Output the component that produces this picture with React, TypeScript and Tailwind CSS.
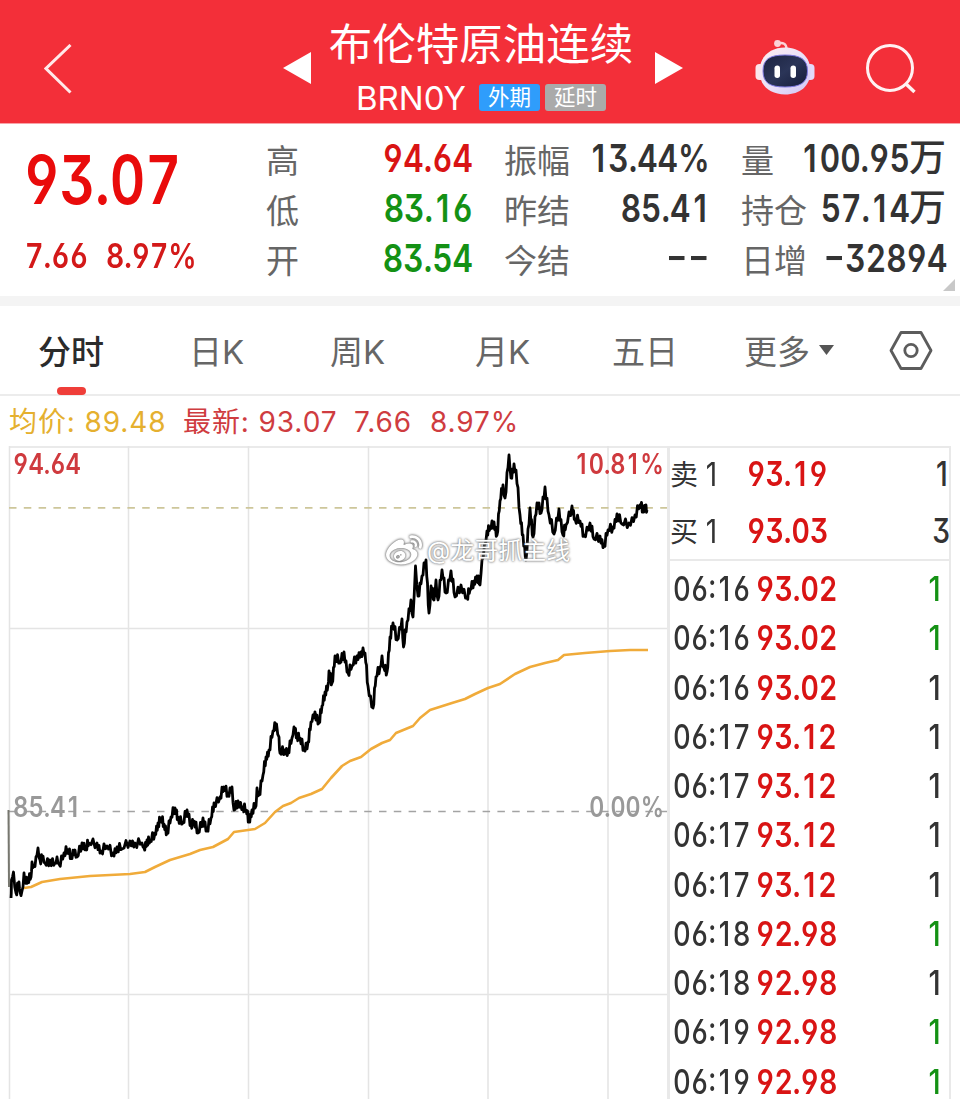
import React from "react";
import { FaWeibo } from "react-icons/fa";
import clsx from "clsx";

type Point = [number, number];

type Quote = {
  label: string;
  value: string;
  unit?: string;
  color: string;
};

type Trade = {
  time: string;
  price: string;
  volume: string;
  color: string;
};

const RED = "text-[#d91414]";
const GREEN = "text-[#149114]";
const DARK = "text-[#333333]";

const quotes: Quote[] = [
  { label: "高", value: "94.64", color: RED },
  { label: "振幅", value: "13.44%", color: DARK },
  { label: "量", value: "100.95", unit: "万", color: DARK },
  { label: "低", value: "83.16", color: GREEN },
  { label: "昨结", value: "85.41", color: DARK },
  { label: "持仓", value: "57.14", unit: "万", color: DARK },
  { label: "开", value: "83.54", color: GREEN },
  { label: "今结", value: "--", color: DARK },
  { label: "日增", value: "-32894", color: DARK },
];

const tabs = [
  { label: "分时", width: "w-[151px]" },
  { label: "日K", width: "w-[141px]" },
  { label: "周K", width: "w-[145px]" },
  { label: "月K", width: "w-[137px]" },
  { label: "五日", width: "w-[132px]" },
];

const orders = [
  { label: "卖", price: "93.19", volume: "1" },
  { label: "买", price: "93.03", volume: "3" },
];

const trades: Trade[] = [
  { time: "06:16", price: "93.02", volume: "1", color: GREEN },
  { time: "06:16", price: "93.02", volume: "1", color: GREEN },
  { time: "06:16", price: "93.02", volume: "1", color: DARK },
  { time: "06:17", price: "93.12", volume: "1", color: DARK },
  { time: "06:17", price: "93.12", volume: "1", color: DARK },
  { time: "06:17", price: "93.12", volume: "1", color: DARK },
  { time: "06:17", price: "93.12", volume: "1", color: DARK },
  { time: "06:18", price: "92.98", volume: "1", color: GREEN },
  { time: "06:18", price: "92.98", volume: "1", color: DARK },
  { time: "06:19", price: "92.98", volume: "1", color: GREEN },
  { time: "06:19", price: "92.98", volume: "1", color: GREEN },
];

const pricePoints: Point[] = [
  [11, 898], [11.5, 880], [13.5, 872], [16, 893], [19, 882], [20, 892], [22, 891],
  [24, 873], [25, 880], [28, 878], [31, 877], [32, 862], [34, 866], [36, 857],
  [38, 848], [40, 860], [43, 856], [45, 863], [50, 860], [55, 863], [57, 857],
  [59, 864], [64, 853], [68, 850], [71, 855], [75, 850], [77, 857], [82, 843],
  [86, 847], [89, 843], [97, 843], [101, 851], [107, 846], [113, 853], [117, 847],
  [122, 849], [130, 841], [135, 843], [142, 843], [144, 848], [147, 840], [150, 842],
  [155, 833], [158, 823], [161, 819], [164, 824], [167, 832], [171, 817], [175, 808],
  [178, 817], [183, 823], [187, 810], [191, 824], [194, 821], [198, 833], [203, 818],
  [207, 831], [211, 818], [214, 803], [220, 797], [224, 787], [228, 793], [232, 787],
  [234, 810], [238, 801], [243, 807], [246, 810], [249, 820], [252, 810], [256, 806],
  [257, 788], [259, 795], [263, 775], [266, 757], [269, 750], [273, 731], [276.5, 724],
  [279, 737], [280, 753], [285, 750], [288, 751], [292, 738], [294, 727], [297, 735],
  [300, 738], [304, 750], [308, 742], [311, 722], [313, 715], [317, 715], [319, 723],
  [322, 706], [325, 692], [328, 685], [329, 671], [332, 683], [335, 656], [340, 663],
  [344, 652], [348, 673], [352, 666], [357, 656], [361, 652], [365, 653], [368, 686],
  [373, 708], [376, 677], [380, 667], [382, 656], [384, 668], [387, 672], [390, 637],
  [393, 623], [397, 640], [402, 619], [403.5, 647], [407, 622], [411, 600], [413, 617],
  [415.5, 566], [418, 596], [422, 576], [426, 560], [429, 613], [431, 586], [434, 600],
  [436, 580], [438, 600], [442, 570], [446, 593], [451, 571], [455, 597], [461, 585],
  [467, 597], [470, 590], [474, 581], [477, 576], [480, 585], [482, 560], [487, 531],
  [490, 529], [494, 522], [497, 535], [500, 501], [503, 485], [505, 498], [509, 455],
  [511, 478], [514, 464], [516, 470], [520, 515], [523, 535], [526, 560], [530, 508],
  [533, 537], [537, 503], [541, 513], [545, 487], [549, 515], [554, 534], [559, 509],
  [563, 535], [566, 525], [572, 506], [575, 519], [580, 521], [584, 535], [590, 523],
  [594, 539], [600, 536], [604, 546], [608, 530], [613, 527], [617, 514], [622, 524],
  [629, 523], [635, 515], [640, 505], [643, 509], [646, 505], [647, 510],
];

const averagePoints: Point[] = [
  [24, 888], [31, 887], [42, 882], [60, 879], [90, 876], [130, 874], [145, 872],
  [155, 867], [170, 860], [190, 854], [200, 850], [213, 847], [228, 839], [234, 832],
  [255, 829], [265, 823], [275, 812], [283, 806], [291, 803], [299, 798], [311, 794],
  [322, 789], [331, 778], [342, 766], [350, 761], [361, 757], [371, 749], [382, 743],
  [390, 740], [396, 733], [413, 726], [420, 718], [430, 710], [452, 703], [465, 699],
  [475, 694], [488, 688], [500, 684], [515, 674], [530, 667], [545, 663], [558, 660],
  [564, 655], [585, 653], [610, 651], [630, 650], [648, 650],
];

const toPath = (points: Point[]) => points.map((p) => p.join(",")).join(" ");

// adds the minute-by-minute noise between two turning points
const withTicks = (points: Point[]) =>
  points.flatMap(([x, y], i): Point[] => {
    const next = points[i + 1];
    if (!next) return [[x, y]];
    const steps = next[0] - x > 2.5 ? 4 : 2;
    return Array.from({ length: steps }, (_, s): Point => {
      const t = s / steps;
      const noise = s === 0 ? 0 : (s % 2 ? 1 : -1) * (1 + 4 * Math.abs(Math.sin(i * 7.3 + s * 2.1)));
      return [x + (next[0] - x) * t, y + (next[1] - y) * t + noise];
    });
  });

// condensed tabular figures: open 6 / 9, flat-topped 3, a 1 without a foot and a long dash
const Num = ({ children, className }: { children: string; className?: string }) => (
  <span
    className={clsx(
      "inline-block whitespace-nowrap [font-feature-settings:'tnum','case','cv03','cv04','cv09']",
      className
    )}
  >
    {children.split(/(1|-+)/).map((part, i) => {
      if (part === "1")
        return (
          <span key={i} className="px-[0.1em] [font-feature-settings:normal]">
            1
          </span>
        );
      if (part.startsWith("-"))
        return (
          <span key={i} className="inline-block origin-right scale-x-[1.5] [font-feature-settings:'case']">
            {part}
          </span>
        );
      return part;
    })}
  </span>
);

const Robot = () => (
  <svg width="60" height="56" viewBox="0 0 60 56">
    <defs>
      <linearGradient id="shell" x1="0" y1="0" x2="1" y2="1">
        <stop offset="0" stopColor="#fdeef0" />
        <stop offset="0.55" stopColor="#e9e0f8" />
        <stop offset="1" stopColor="#cfc3f3" />
      </linearGradient>
      <linearGradient id="visor" x1="0" y1="0" x2="1" y2="1">
        <stop offset="0" stopColor="#1c2340" />
        <stop offset="0.5" stopColor="#2b3558" />
        <stop offset="1" stopColor="#161c3a" />
      </linearGradient>
    </defs>
    <path d="M23 3.500C28 2 31.500 4 31.500 9" fill="none" stroke="#fbd3d8" strokeWidth="2.400" />
    <circle cx="22.500" cy="3.500" r="3.400" fill="#fbd3d8" />
    <rect x="0.500" y="24" width="9" height="16" rx="4" fill="#fbe6ec" />
    <rect x="50.500" y="24" width="9" height="16" rx="4" fill="#e3dafa" />
    <path
      d="M30 7.500C45 7.500 55.500 17 55.500 31C55.500 46 45 54.500 30 54.500C15 54.500 4.500 46 4.500 31C4.500 17 15 7.500 30 7.500Z"
      fill="url(#shell)"
    />
    <path
      d="M30 15C45 15 52.500 19 52.500 31C52.500 43 45 47 30 47C15 47 8 43 8 31C8 19 15 15 30 15Z"
      fill="url(#visor)"
      stroke="#7d78e0"
      strokeWidth="1"
    />
    <rect x="19.500" y="25.500" width="5.500" height="12.500" rx="2.700" fill="#fff" />
    <rect x="35.500" y="25.500" width="5.500" height="12.500" rx="2.700" fill="#fff" />
  </svg>
);

const Header = () => (
  <header className="flex h-[124px] shrink-0 border-b border-[#f9a3a8] bg-[#f32f39] text-white">
    <div className="w-[283px] pt-[44px] pl-[44px]">
      <svg width="28" height="50" viewBox="0 0 28 50" fill="none" stroke="#ffe9ea" strokeWidth="3">
        <path d="M26.500 1L2 24.500L26.500 48.500" />
      </svg>
    </div>
    <svg className="mt-[52px] shrink-0" width="28" height="32" viewBox="0 0 28 32" fill="#fff">
      <path d="M0 16L28 0V32Z" />
    </svg>
    <div className="flex w-[344px] shrink-0 flex-col items-center">
      <h1 className="mt-[12px] -ml-[4px] h-[64px] text-[43.500px] leading-[64px] font-normal whitespace-nowrap">
        布伦特原油连续
      </h1>
      <div className="flex h-[43px] w-full items-center pl-[45px]">
        <span className="w-[123px] text-[33px] leading-[42px] font-normal">BRN0Y</span>
        <span className="flex h-[27px] w-[61px] items-center justify-center rounded-[3px] bg-[#2f9dfb] text-[21.500px] leading-none">
          外期
        </span>
        <span className="ml-[5px] flex h-[27px] w-[61px] items-center justify-center rounded-[3px] bg-[#aaaaaa] text-[21.500px] leading-none">
          延时
        </span>
      </div>
    </div>
    <svg className="mt-[52px] shrink-0" width="28" height="32" viewBox="0 0 28 32" fill="#fff">
      <path d="M28 16L0 0V32Z" />
    </svg>
    <div className="pt-[40px] pl-[72px]">
      <Robot />
    </div>
    <div className="pt-[43px] pl-[50px]">
      <svg width="52" height="52" viewBox="0 0 52 52" fill="none" stroke="#fff2f2" strokeWidth="3">
        <circle cx="25" cy="25" r="22.500" />
        <path d="M40.500 40.500L49.500 49" strokeWidth="3.500" />
      </svg>
    </div>
  </header>
);

const Summary = () => (
  <section className="relative flex h-[172px] shrink-0">
    <div className="w-[266px] pl-[24px] text-[#e90b0b]">
      <div className="h-[111px] pt-[15px]">
        <Num className="origin-left scale-x-[0.82] text-[67px] leading-[82px] font-semibold">93.07</Num>
      </div>
      <div className="flex pl-[1px] font-semibold text-[#d31919]">
        <div className="w-[81px]">
          <Num className="origin-left scale-x-[0.84] text-[34px] leading-[42px]">7.66</Num>
        </div>
        <Num className="origin-left scale-x-[0.83] text-[34px] leading-[42px]">8.97%</Num>
      </div>
    </div>
    <div className="grid h-[162px] grid-cols-[206px_237px_237px] grid-rows-3 pt-[12px]">
      {quotes.map((q, i) => (
        <div key={q.label} className={clsx("flex h-[50px] items-center", i % 3 !== 0 && "pl-[32px]")}>
          <span className="shrink-0 text-[33px] leading-[50px] text-[#666666]">{q.label}</span>
          <div className={clsx("-mt-[6px] flex min-w-0 flex-1 items-center justify-end", q.color)}>
            <Num className="origin-right translate-x-[1px] scale-x-[0.82] text-[38.500px] leading-[50px] font-semibold">
              {q.value}
            </Num>
            {q.unit && <span className="text-[37px] leading-[50px] font-medium">{q.unit}</span>}
          </div>
        </div>
      ))}
    </div>
    <svg className="absolute right-[5px] bottom-[5px]" width="12" height="12" viewBox="0 0 12 12">
      <path d="M12 0V12H0Z" fill="#c8c8c8" />
    </svg>
  </section>
);

const Tabs = () => (
  <nav className="flex h-[90px] shrink-0 border-b-2 border-[#ececec] pl-[38px] text-[33px] text-[#666666]">
    {tabs.map((tab, i) => (
      <div key={tab.label} className={clsx("shrink-0", tab.width)}>
        <div
          className={clsx(
            "w-fit pt-[22px] leading-[48px] whitespace-nowrap",
            i === 0 ? "font-medium text-[#2b2b2b]" : "font-normal"
          )}
        >
          {tab.label}
        </div>
        {i === 0 && <div className="mt-[11px] ml-[19px] h-[8px] w-[29px] rounded-full bg-[#ef3e39]" />}
      </div>
    ))}
    <div className="flex w-[145px] shrink-0 items-center pt-[4px]">
      <span className="leading-[48px]">更多</span>
      <svg className="mb-[4px] ml-[9px]" width="15" height="10" viewBox="0 0 15 10" fill="#555">
        <path d="M0 0H15L7.500 10Z" />
      </svg>
    </div>
    <svg className="mt-[24px]" width="44" height="40" viewBox="0 0 44 40" fill="none" stroke="#5c5c5c" strokeWidth="2.800">
      <path d="M12 2.500H32L42 20.500L32 38.500H12L2 20.500Z" strokeLinejoin="round" />
      <circle cx="22" cy="20.500" r="6.200" />
    </svg>
  </nav>
);

const Legend = () => (
  <div className="flex h-[52px] shrink-0 items-center pl-[9px] text-[28px] tracking-[0.9px] text-[#cf3c40]">
    <span className="w-[174px] whitespace-nowrap text-[#e5b02f]">均价: 89.48</span>
    <span className="w-[171px] whitespace-nowrap">最新: 93.07</span>
    <span className="w-[76px]">7.66</span>
    <span>8.97%</span>
  </div>
);

const Chart = () => (
  <div className="relative w-[667px] shrink-0">
    <svg width="667" height="653" viewBox="0 446 667 653" fill="none">
      <g stroke="#e4e4e4" strokeWidth="1.500">
        <path d="M9 447H667M9 628.500H667M9 994.500H667" />
        <path d="M9.500 446V1099M128.500 446V1099M248.500 446V1099M368.500 446V1099M488 446V1099M608 446V1099" />
      </g>
      <path d="M9 507.800H667" stroke="#cdc69a" strokeWidth="1.700" strokeDasharray="7.500 7.300" />
      <path d="M9 811.500H667" stroke="#a3a3a3" strokeWidth="1.700" strokeDasharray="7.500 7.300" />
      <path d="M8.500 810L9 887" stroke="#77776f" strokeWidth="2" />
      <polyline points={toPath(averagePoints)} stroke="#f0ab3a" strokeWidth="2.600" strokeLinejoin="round" />
      <polyline points={toPath(withTicks(pricePoints))} stroke="#000" strokeWidth="2.800" strokeLinejoin="round" />
    </svg>
    <Num className="absolute top-[1px] left-[13px] origin-left scale-x-[0.85] text-[28px] leading-[34px] font-semibold text-[#cf3a3e]">
      94.64
    </Num>
    <Num className="absolute top-[1px] right-[3px] origin-right scale-x-[0.84] text-[28px] leading-[34px] font-semibold text-[#cf3a3e]">
      10.81%
    </Num>
    <Num className="absolute top-[344px] left-[13px] origin-left scale-x-[0.85] text-[28px] leading-[34px] font-semibold text-[#999999]">
      85.41
    </Num>
    <Num className="absolute top-[344px] right-[3px] origin-right scale-x-[0.83] text-[28px] leading-[34px] font-semibold text-[#999999]">
      0.00%
    </Num>
    <div className="absolute top-[86px] left-[386px] flex h-[38px] items-center text-white">
      <FaWeibo className="size-[36px] [filter:drop-shadow(0_0_1px_#777)_drop-shadow(0_0_1px_#999)]" />
      <span className="ml-[5px] text-[24px] leading-[38px] whitespace-nowrap [text-shadow:0_0_2px_#777,0_0_3px_#888]">
        @龙哥抓主线
      </span>
    </div>
  </div>
);

const OrderBook = () => (
  <div className="h-[653px] w-[284px] shrink-0 border-t-2 border-r-2 border-l-[3px] border-[#e9e9e9]">
    <div className="h-[113px] border-b-2 border-[#e9e9e9]">
      {orders.map((o) => (
        <div key={o.label} className="flex h-[56.500px] items-center text-[#333333]">
          <span className="-mt-[2px] w-[33px] text-[28px]">{o.label}</span>
          <div className="-mt-[4px] w-[44px]">
            <Num className="origin-left scale-x-[0.85] text-[33px] leading-[50px] font-normal">1</Num>
          </div>
          <Num className={clsx("-mt-[4px] origin-left scale-x-[0.85] text-[33.500px] leading-[50px] font-semibold", RED)}>
            {o.price}
          </Num>
          <div className="-mt-[4px] min-w-0 flex-1 text-right">
            <Num className="origin-right translate-x-[2px] scale-x-[0.85] text-[33.500px] leading-[50px] font-medium">
              {o.volume}
            </Num>
          </div>
        </div>
      ))}
    </div>
    <div className="pt-[11px]">
      {trades.map((t, i) => (
        <div key={i} className="flex h-[49.250px] items-start pr-[5px] pl-[3px] text-[33.500px] leading-[34px] text-[#333333]">
          <div className="w-[83px] shrink-0">
            <Num className="origin-left scale-x-[0.82] font-medium">{t.time}</Num>
          </div>
          <Num className={clsx("origin-left scale-x-[0.85] font-semibold", RED)}>{t.price}</Num>
          <div className="min-w-0 flex-1 text-right">
            <Num className={clsx("origin-right scale-x-[0.88] font-medium", t.color)}>{t.volume}</Num>
          </div>
        </div>
      ))}
    </div>
  </div>
);

const App = () => (
  <div className="flex h-[1099px] w-[960px] flex-col overflow-hidden bg-white font-[Inter,'Noto_Sans_CJK_SC',sans-serif]">
    <Header />
    <Summary />
    <div className="h-[10px] shrink-0 bg-[#f4f4f4]" />
    <Tabs />
    <Legend />
    <div className="-mt-[2px] flex h-[655px] shrink-0 overflow-hidden">
      <Chart />
      <OrderBook />
    </div>
  </div>
);

export default App;
